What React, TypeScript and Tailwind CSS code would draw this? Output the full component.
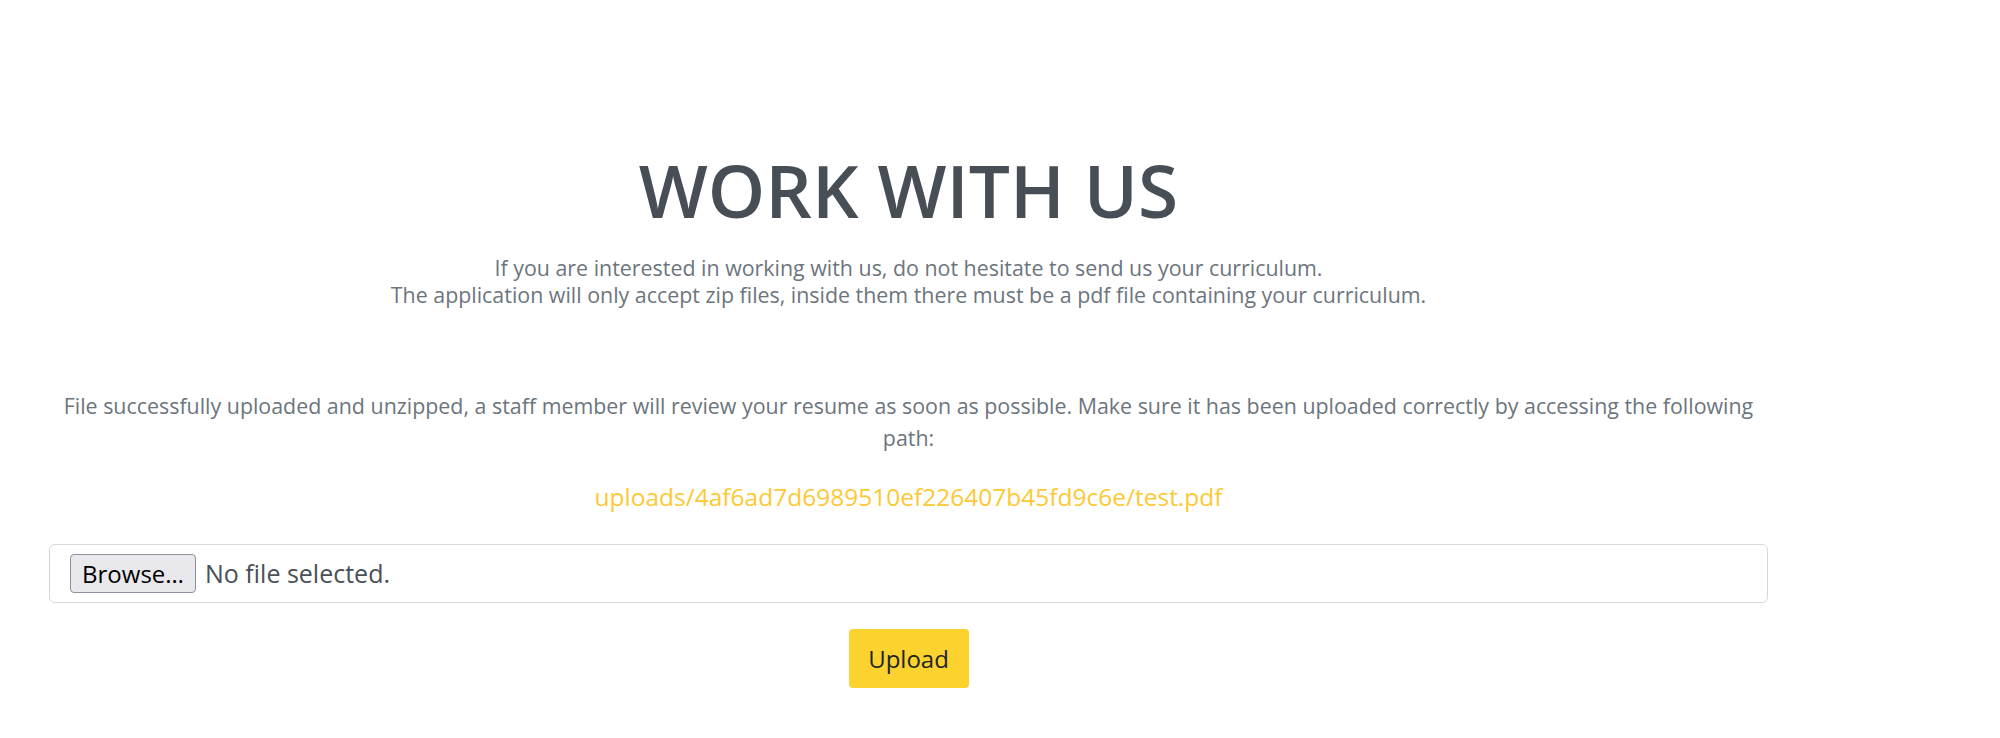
import { useState } from "react"

const uploadedPath = "uploads/4af6ad7d6989510ef226407b45fd9c6e/test.pdf"

function FileField() {
  const [fileName] = useState<string | null>(null)

  return (
    <div className="mt-[30px] h-[59px] flex items-center border border-[#d5d9de] rounded-[6px] bg-white pl-[20px]">
      <button className="h-[39px] w-[126px] bg-[#e9e9ed] border border-[#8f8f9d] rounded-[4px] text-[24px] text-black leading-none">
        Browse…
      </button>
      <span className="ml-[9px] text-[25px] text-[#495057]">
        {fileName ?? "No file selected."}
      </span>
    </div>
  )
}

export default function App() {
  return (
    <div className="min-h-[738px] bg-white" style={{ fontFamily: '"Open Sans", "Noto Sans", sans-serif' }}>
      <div className="ml-[49px] w-[1719px] pt-[150px] text-center">
        <h1 className="text-[73px] leading-[80px] font-semibold text-[#474e55]">WORK WITH US</h1>

        <p className="mt-[24px] text-[21.4px] leading-[27px] text-[#6c757d] whitespace-nowrap">
          If you are interested in working with us, do not hesitate to send us your curriculum.
          <br />
          The application will only accept zip files, inside them there must be a pdf file containing your curriculum.
        </p>

        <p className="mt-[82px] text-[21.4px] leading-[32px] text-[#6c757d] whitespace-nowrap">
          File successfully uploaded and unzipped, a staff member will review your resume as soon as possible. Make sure it has been uploaded correctly by accessing the following
          <br />
          path:
        </p>

        <a href="#" className="block mt-[26px] text-[24.5px] leading-[34px] text-[#fcc934]">
          {uploadedPath}
        </a>

        <FileField />

        <button className="mt-[26px] w-[120px] h-[59px] bg-[#fcd22f] rounded-[4px] text-[24px] text-[#212529]">
          Upload
        </button>
      </div>
    </div>
  )
}
